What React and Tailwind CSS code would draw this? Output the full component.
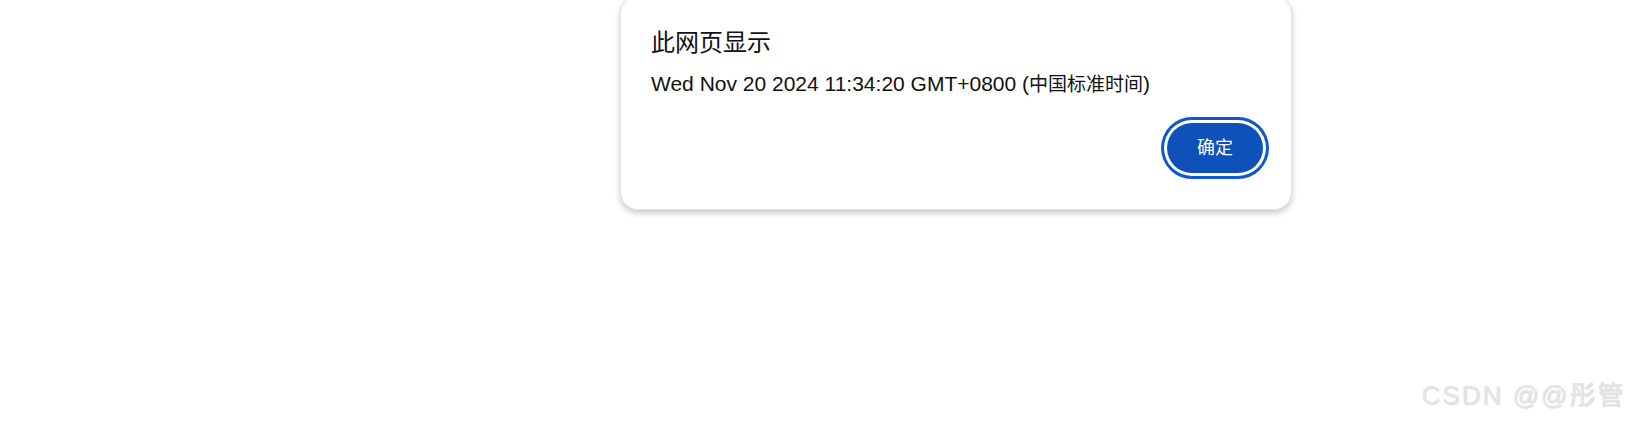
export default function App() {
  const latin = { fontFamily: '"Liberation Sans", "Noto Sans CJK SC", Arial, sans-serif' };

  return (
    <div className="relative w-full h-[427px] bg-white overflow-hidden" style={latin}>
      <div className="ml-[620px] -mt-[4px] w-[672px] bg-white rounded-[18px] border border-[#e3e3e3] shadow-[0_3px_6px_rgba(0,0,0,0.22)] pt-[32px] pl-[30px] pr-[28px] pb-[36px]">
        <div className="text-[24px] leading-[28px] text-[#111]">此网页显示</div>
        <div className="mt-[13px] text-[21px] leading-[28px] text-[#111]">
          Wed Nov 20 2024 11:34:20 GMT+0800 (<span className="text-[19px]">中国标准时间</span>)
        </div>
        <div className="flex justify-end mt-[24px]">
          <button className="w-[96px] h-[50px] rounded-full bg-[#0f51bb] text-white text-[18px] ring-[3px] ring-[#0f57d0] ring-offset-[3px] ring-offset-white">
            确定
          </button>
        </div>
      </div>
      <div className="absolute right-[4px] bottom-[17px] text-[26px] leading-[30px] tracking-[2px] text-[#e4e4e4] [text-shadow:1px_1px_1px_rgba(0,0,0,0.14)]">
        CSDN @@彤管
      </div>
    </div>
  );
}
